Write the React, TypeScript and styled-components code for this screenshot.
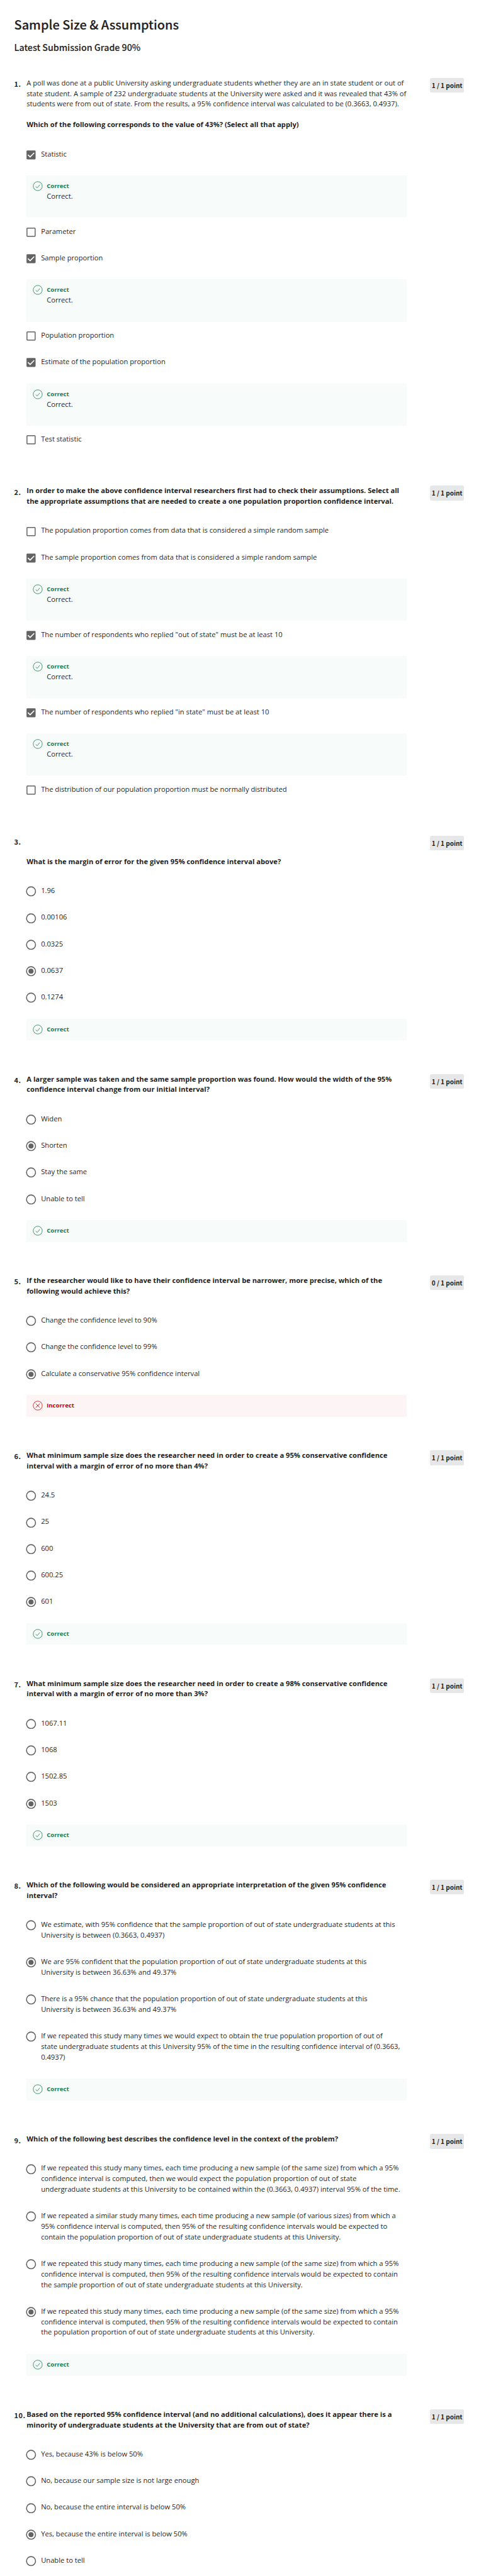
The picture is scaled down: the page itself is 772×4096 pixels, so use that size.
import React from 'react';
import styled, { createGlobalStyle } from 'styled-components';

/* Design sizes are given at full size and converted to the compact page scale. */
const SCALE = 0.6389;
const u = (n: number) => `${(n * SCALE).toFixed(3)}px`;

const INK = '#1f1f1f';
const GREY = '#636363';
const GREEN = '#1d7c50';
const RED = '#d30001';

const GlobalStyle = createGlobalStyle`
  body {
    margin: 0;
    background: #fff;
    color: ${INK};
    font-family: 'Open Sans', sans-serif;
  }
`;

const Page = styled.main`
  box-sizing: border-box;
  width: 772px;
  height: 4096px;
  overflow: hidden;
  padding: ${u(41.4)} 0 0 ${u(35.3)};
`;

const Title = styled.h1`
  margin: 0;
  font: 500 ${u(31.2)} / ${u(40)} 'Noto Sans CJK SC', sans-serif;
  -webkit-text-stroke: 0.2px ${INK};
`;

const Grade = styled.h2`
  margin: ${u(19.9)} 0 ${u(62.6)};
  font: 500 ${u(22.3)} / ${u(30)} 'Noto Sans CJK SC', sans-serif;
  -webkit-text-stroke: 0.12px ${INK};
`;

const QuestionList = styled.div`
  display: flex;
  flex-direction: column;
`;

const QuestionRow = styled.section<{ $space: number }>`
  display: flex;
  align-items: flex-start;
  margin-bottom: ${(p) => u(p.$space)};
`;

const QuestionNumber = styled.div`
  flex: none;
  width: ${u(30.9)};
  padding-top: ${u(2.3)};
  font: 700 ${u(17.2)} / ${u(26.25)} 'Noto Sans CJK SC', sans-serif;
  letter-spacing: ${u(0.7)};
  white-space: nowrap;
`;

const QuestionBody = styled.div`
  flex: none;
  width: ${u(944.4)};
`;

const Badge = styled.div`
  flex: none;
  box-sizing: border-box;
  width: ${u(85)};
  height: ${u(36.8)};
  margin-left: ${u(58.5)};
  border-radius: ${u(4)};
  background: #e5e7e8;
  text-align: center;
  font: 700 ${u(15.6)} / ${u(36.8)} 'Noto Sans CJK SC', sans-serif;
  white-space: nowrap;
`;

const Prompt = styled.p<{ $bold?: boolean }>`
  margin: 0;
  min-height: ${u(26.25)};
  font-size: ${u(17.5)};
  line-height: ${u(26.25)};
  font-weight: ${(p) => (p.$bold ? 700 : 400)};
  white-space: pre;

  & + & {
    margin-top: ${u(25.3)};
  }
`;

const Options = styled.div`
  margin-top: ${u(46.2)};
`;

const OptionRow = styled.div`
  display: flex;
  align-items: flex-start;

  & + & {
    margin-top: ${u(40)};
  }
`;

const Mark = styled.svg`
  flex: none;
  width: ${u(26)};
  height: ${u(26)};
  margin: ${u(1.8)} ${u(11.8)} ${u(-4)} ${u(-2)};
`;

const OptionText = styled.span`
  font-size: ${u(17.5)};
  line-height: ${u(26.25)};
  white-space: pre;
`;

const FeedbackBox = styled.div<{ $wrong?: boolean; $tall?: boolean }>`
  box-sizing: border-box;
  display: flex;
  align-items: flex-start;
  height: ${(p) => u(p.$tall ? 105.4 : 54.4)};
  margin: ${u(40)} 0 ${(p) => u(p.$tall ? 20.9 : 0)};
  padding: ${u(14.5)} ${u(15)};
  background: ${(p) => (p.$wrong ? '#fdf5f5' : '#f7fbf9')};
  color: ${(p) => (p.$wrong ? RED : GREEN)};
`;

const FeedbackIcon = styled.svg`
  flex: none;
  width: ${u(25)};
  height: ${u(25)};
  margin-right: ${u(9.9)};
`;

const FeedbackTitle = styled.div`
  font-size: ${u(15)};
  line-height: ${u(25)};
  font-weight: 700;
`;

const FeedbackNote = styled.div`
  color: ${INK};
  font-size: ${u(17.5)};
  line-height: ${u(26.25)};
`;

function Radio({ on }: { on?: boolean }) {
  return (
    <Mark viewBox="0 0 26 26">
      <circle cx="13" cy="13" r="11.2" fill="none" stroke={GREY} strokeWidth="2.5" />
      {on && <circle cx="13" cy="13" r="6.3" fill={GREY} />}
    </Mark>
  );
}

function Checkbox({ on }: { on?: boolean }) {
  return (
    <Mark viewBox="0 0 26 26">
      {on ? (
        <>
          <rect x="1.8" y="1.8" width="22.5" height="22.5" rx="2.2" fill={GREY} />
          <path d="M5.3 12.8 L10.7 18 L20.8 7.8" fill="none" stroke="#fff" strokeWidth="2.7" />
        </>
      ) : (
        <rect x="2.9" y="2.9" width="20.3" height="20.3" rx="1.2" fill="none" stroke={GREY} strokeWidth="2.3" />
      )}
    </Mark>
  );
}

function Feedback({ wrong, note }: { wrong?: boolean; note?: string }) {
  return (
    <FeedbackBox $wrong={wrong} $tall={!!note}>
      <FeedbackIcon viewBox="0 0 25 25" fill="none" stroke="currentColor" strokeWidth="1.25">
        <circle cx="12.5" cy="12.5" r="11.2" />
        {wrong ? (
          <path d="M7.4 7.4 L17.6 17.6 M17.6 7.4 L7.4 17.6" />
        ) : (
          <path d="M7.3 13.2 L11.2 16.8 L17.5 9.1" />
        )}
      </FeedbackIcon>
      <div>
        <FeedbackTitle>{wrong ? 'Incorrect' : 'Correct'}</FeedbackTitle>
        {note && <FeedbackNote>{note}</FeedbackNote>}
      </div>
    </FeedbackBox>
  );
}

type Question = {
  intro?: string;
  prompt: string;
  kind: 'radio' | 'check';
  options: string[];
  chosen: number[];
  wrong?: boolean;
};

const questions: Question[] = [
  {
    intro:
      'A poll was done at a public University asking undergraduate students whether they are an in state student or out of\nstate student. A sample of 232 undergraduate students at the University were asked and it was revealed that 43% of\nstudents were from out of state. From the results, a 95% confidence interval was calculated to be (0.3663, 0.4937).',
    prompt: 'Which of the following corresponds to the value of 43%? (Select all that apply)',
    kind: 'check',
    options: [
      'Statistic',
      'Parameter',
      'Sample proportion',
      'Population proportion',
      'Estimate of the population proportion',
      'Test statistic',
    ],
    chosen: [0, 2, 4],
  },
  {
    prompt:
      'In order to make the above confidence interval researchers first had to check their assumptions. Select all\nthe appropriate assumptions that are needed to create a one population proportion confidence interval.',
    kind: 'check',
    options: [
      'The population proportion comes from data that is considered a simple random sample',
      'The sample proportion comes from data that is considered a simple random sample',
      'The number of respondents who replied "out of state" must be at least 10',
      'The number of respondents who replied "in state" must be at least 10',
      'The distribution of our population proportion must be normally distributed',
    ],
    chosen: [1, 2, 3],
  },
  {
    intro: '',
    prompt: 'What is the margin of error for the given 95% confidence interval above?',
    kind: 'radio',
    options: ['1.96', '0.00106', '0.0325', '0.0637', '0.1274'],
    chosen: [3],
  },
  {
    prompt:
      'A larger sample was taken and the same sample proportion was found. How would the width of the 95%\nconfidence interval change from our initial interval?',
    kind: 'radio',
    options: ['Widen', 'Shorten', 'Stay the same', 'Unable to tell'],
    chosen: [1],
  },
  {
    prompt:
      'If the researcher would like to have their confidence interval be narrower, more precise, which of the\nfollowing would achieve this?',
    kind: 'radio',
    options: [
      'Change the confidence level to 90%',
      'Change the confidence level to 99%',
      'Calculate a conservative 95% confidence interval',
    ],
    chosen: [2],
    wrong: true,
  },
  {
    prompt:
      'What minimum sample size does the researcher need in order to create a 95% conservative confidence\ninterval with a margin of error of no more than 4%?',
    kind: 'radio',
    options: ['24.5', '25', '600', '600.25', '601'],
    chosen: [4],
  },
  {
    prompt:
      'What minimum sample size does the researcher need in order to create a 98% conservative confidence\ninterval with a margin of error of no more than 3%?',
    kind: 'radio',
    options: ['1067.11', '1068', '1502.85', '1503'],
    chosen: [3],
  },
  {
    prompt:
      'Which of the following would be considered an appropriate interpretation of the given 95% confidence\ninterval?',
    kind: 'radio',
    options: [
      'We estimate, with 95% confidence that the sample proportion of out of state undergraduate students at this\nUniversity is between (0.3663, 0.4937)',
      'We are 95% confident that the population proportion of out of state undergraduate students at this\nUniversity is between 36.63% and 49.37%',
      'There is a 95% chance that the population proportion of out of state undergraduate students at this\nUniversity is between 36.63% and 49.37%',
      'If we repeated this study many times we would expect to obtain the true population proportion of out of\nstate undergraduate students at this University 95% of the time in the resulting confidence interval of (0.3663,\n0.4937)',
    ],
    chosen: [1],
  },
  {
    prompt: 'Which of the following best describes the confidence level in the context of the problem?',
    kind: 'radio',
    options: [
      'If we repeated this study many times, each time producing a new sample (of the same size) from which a 95%\nconfidence interval is computed, then we would expect the population proportion of out of state\nundergraduate students at this University to be contained within the (0.3663, 0.4937) interval 95% of the time.',
      'If we repeated a similar study many times, each time producing a new sample (of various sizes) from which a\n95% confidence interval is computed, then 95% of the resulting confidence intervals would be expected to\ncontain the population proportion of out of state undergraduate students at this University.',
      'If we repeated this study many times, each time producing a new sample (of the same size) from which a 95%\nconfidence interval is computed, then 95% of the resulting confidence intervals would be expected to contain\nthe sample proportion of out of state undergraduate students at this University.',
      'If we repeated this study many times, each time producing a new sample (of the same size) from which a 95%\nconfidence interval is computed, then 95% of the resulting confidence intervals would be expected to contain\nthe population proportion of out of state undergraduate students at this University.',
    ],
    chosen: [3],
  },
  {
    prompt:
      'Based on the reported 95% confidence interval (and no additional calculations), does it appear there is a\nminority of undergraduate students at the University that are from out of state?',
    kind: 'radio',
    options: [
      'Yes, because 43% is below 50%',
      'No, because our sample size is not large enough',
      'No, because the entire interval is below 50%',
      'Yes, because the entire interval is below 50%',
      'Unable to tell',
    ],
    chosen: [3],
  },
];

function QuestionItem({ q, index }: { q: Question; index: number }) {
  const isCheck = q.kind === 'check';
  const isLast = index === questions.length - 1;
  return (
    <QuestionRow $space={isLast ? 0 : isCheck ? 102.4 : 83.4}>
      <QuestionNumber>{index + 1}.</QuestionNumber>
      <QuestionBody>
        {q.intro !== undefined && <Prompt>{q.intro}</Prompt>}
        <Prompt $bold>{q.prompt}</Prompt>
        <Options>
          {q.options.map((text, i) => {
            const on = q.chosen.includes(i);
            return (
              <React.Fragment key={text}>
                <OptionRow>
                  {isCheck ? <Checkbox on={on} /> : <Radio on={on} />}
                  <OptionText>{text}</OptionText>
                </OptionRow>
                {isCheck && on && <Feedback note="Correct." />}
              </React.Fragment>
            );
          })}
        </Options>
        {!isCheck && !isLast && <Feedback wrong={q.wrong} />}
      </QuestionBody>
      <Badge>{q.wrong ? 0 : 1} / 1 point</Badge>
    </QuestionRow>
  );
}

export default function App() {
  return (
    <>
      <GlobalStyle />
      <Page>
        <Title>Sample Size &amp; Assumptions</Title>
        <Grade>Latest Submission Grade 90%</Grade>
        <QuestionList>
          {questions.map((q, i) => (
            <QuestionItem key={i} q={q} index={i} />
          ))}
        </QuestionList>
      </Page>
    </>
  );
}
